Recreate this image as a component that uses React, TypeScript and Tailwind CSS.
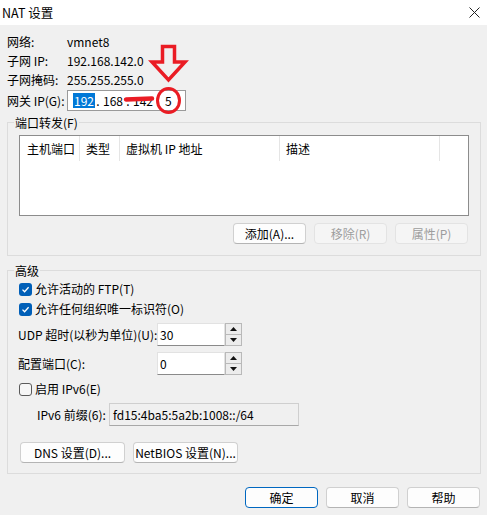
import React from "react";

const font = { fontFamily: '"Noto Sans CJK SC", "Noto Sans", sans-serif' };

function Btn({ label, w, disabled, primary }: { label: string; w: string; disabled?: boolean; primary?: boolean }) {
  let cls = "h-[21px] flex items-center justify-center rounded-[4px] border text-[12px] leading-[16px] whitespace-nowrap ";
  if (disabled) cls += "bg-[#f5f5f5] border-[#e3e3e3] text-[#9d9d9d]";
  else if (primary) cls += "bg-[#fdfdfd] border-[#0067c0] text-black";
  else cls += "bg-[#fdfdfd] border-[#d0d0d0] border-b-[#b4b4b4] text-black";
  return <div className={cls + " " + w}>{label}</div>;
}

function Check({ checked }: { checked: boolean }) {
  if (checked)
    return (
      <div className="w-[13px] h-[13px] rounded-[3px] bg-[#005fb8] flex items-center justify-center shrink-0">
        <svg width="9" height="9" viewBox="0 0 9 9">
          <path d="M1.5 4.6 L3.6 6.7 L7.6 2.2" stroke="white" strokeWidth="1.3" fill="none" />
        </svg>
      </div>
    );
  return <div className="w-[13px] h-[13px] rounded-[3px] border border-[#5a5a5a] bg-[#f6f6f6] shrink-0" />;
}

function Spin() {
  return (
    <div className="w-[17px] h-[23px] flex flex-col border border-[#b9b9b9] bg-[#f0f0f0]">
      <div className="flex-1 flex items-center justify-center border-b border-[#b9b9b9] bg-[#ececec]">
        <svg width="7" height="4" viewBox="0 0 7 4">
          <path d="M0 4 L3.5 0 L7 4 Z" fill="#111" />
        </svg>
      </div>
      <div className="flex-1 flex items-center justify-center bg-[#ececec]">
        <svg width="7" height="4" viewBox="0 0 7 4">
          <path d="M0 0 L3.5 4 L7 0 Z" fill="#111" />
        </svg>
      </div>
    </div>
  );
}

function Input({ value }: { value: string }) {
  return (
    <div className="w-[68px] h-[23px] bg-white border border-[#e2e2e2] border-b-[#8a8a8a] pl-[2px] flex items-center text-[12px] leading-[16px]">
      {value}
    </div>
  );
}

export default function App() {
  return (
    <div className="relative w-[487px] h-[515px] bg-[#f0f0f0] overflow-hidden text-black text-[12px]" style={font}>
      {/* title bar */}
      <div className="h-[25px] bg-white flex items-center justify-between pl-[2px] pr-[7px]">
        <span className="text-[12.5px] leading-[16px]">NAT 设置</span>
        <svg width="11" height="11" viewBox="0 0 11 11">
          <path d="M0.5 0.5 L10.5 10.5 M10.5 0.5 L0.5 10.5" stroke="#222" strokeWidth="1" />
        </svg>
      </div>

      {/* info rows */}
      <div className="mt-[7px] pl-[7px] flex flex-col whitespace-nowrap">
        <div className="flex h-[19px] items-center leading-[16px]">
          <span className="w-[60px]">网络:</span>
          <span>vmnet8</span>
        </div>
        <div className="flex h-[19px] items-center leading-[16px]">
          <span className="w-[60px]">子网 IP:</span>
          <span>192.168.142.0</span>
        </div>
        <div className="flex h-[19px] items-center leading-[16px]">
          <span className="w-[60px]">子网掩码:</span>
          <span>255.255.255.0</span>
        </div>
        <div className="flex h-[21px] items-center leading-[16px] mt-[1px]">
          <span className="w-[60px]">网关 IP(G):</span>
          <div className="w-[119px] h-[21px] bg-white border border-[#9a9a9a] pl-[5px] flex items-center">
            <span className="w-[20px]">
              <span className="bg-[#0078d7] text-white px-[1px] leading-[15px] inline-block">192</span>
            </span>
            <span className="w-[10px] text-center">.</span>
            <span className="w-[20px]">168</span>
            <span className="w-[10px] text-center">.</span>
            <span className="w-[20px]">142</span>
            <span className="w-[10px] text-center">.</span>
            <span className="w-[20px] pl-[2px]">5</span>
          </div>
        </div>
      </div>

      {/* port forwarding group */}
      <div className="ml-[7px] mt-[11px] w-[474px] h-[134px] border border-[#dcdcdc] flex flex-col whitespace-nowrap">
        <div className="-mt-[8px] ml-[6px] px-[1px] w-fit bg-[#f0f0f0] h-[16px] leading-[16px]">端口转发(F)</div>
        <div className="ml-[11px] mt-[4px] w-[450px] h-[81px] border border-[#8c8c8c] bg-white">
          <div className="flex h-[25px] leading-[16px]">
            <div className="w-[60px] border-r border-[#e5e5e5] pl-[7px] flex items-center">主机端口</div>
            <div className="w-[40px] border-r border-[#e5e5e5] pl-[6px] flex items-center">类型</div>
            <div className="w-[160px] border-r border-[#e5e5e5] pl-[6px] flex items-center">虚拟机 IP 地址</div>
            <div className="w-[160px] border-r border-[#e5e5e5] pl-[6px] flex items-center">描述</div>
          </div>
        </div>
        <div className="flex justify-end gap-[8px] pr-[12px] mt-[7px]">
          <Btn label="添加(A)..." w="w-[73px]" />
          <Btn label="移除(R)" w="w-[73px]" disabled />
          <Btn label="属性(P)" w="w-[73px]" disabled />
        </div>
      </div>

      {/* advanced group */}
      <div className="ml-[7px] mt-[14px] w-[474px] h-[204px] border border-[#dcdcdc] flex flex-col whitespace-nowrap">
        <div className="-mt-[8px] ml-[6px] px-[1px] w-fit bg-[#f0f0f0] h-[16px] leading-[16px]">高级</div>
        <div className="pl-[11px] h-[20px] flex items-center gap-[3px] leading-[16px]">
          <Check checked />
          <span>允许活动的 FTP(T)</span>
        </div>
        <div className="pl-[11px] h-[20px] flex items-center gap-[3px] leading-[16px]">
          <Check checked />
          <span>允许任何组织唯一标识符(O)</span>
        </div>
        <div className="pl-[10px] mt-[4px] h-[23px] flex items-center leading-[16px]">
          <span className="w-[139px] shrink-0">UDP 超时(以秒为单位)(U):</span>
          <Input value="30" />
          <Spin />
        </div>
        <div className="pl-[10px] mt-[6px] h-[23px] flex items-center leading-[16px]">
          <span className="w-[139px] shrink-0">配置端口(C):</span>
          <Input value="0" />
          <Spin />
        </div>
        <div className="pl-[11px] mt-[4px] h-[20px] flex items-center gap-[3px] leading-[16px]">
          <Check checked={false} />
          <span>启用 IPv6(E)</span>
        </div>
        <div className="pl-[29px] mt-[4px] h-[23px] flex items-center leading-[16px]">
          <span className="w-[72px] shrink-0">IPv6 前缀(6):</span>
          <div className="w-[190px] h-[23px] bg-[#f0f0f0] border border-[#cfcfcf] border-b-[#a8a8a8] pl-[3px] flex items-center">
            fd15:4ba5:5a2b:1008::/64
          </div>
        </div>
        <div className="pl-[12px] mt-[16px] flex gap-[8px]">
          <Btn label="DNS 设置(D)..." w="w-[105px]" />
          <Btn label="NetBIOS 设置(N)..." w="w-[105px]" />
        </div>
      </div>

      {/* bottom buttons */}
      <div className="mt-[13px] flex justify-end gap-[8px] pr-[7px]">
        <Btn label="确定" w="w-[73px]" primary />
        <Btn label="取消" w="w-[73px]" />
        <Btn label="帮助" w="w-[73px]" />
      </div>

      {/* red annotation overlay */}
      <svg className="absolute left-0 top-0 pointer-events-none" width="487" height="515" viewBox="0 0 487 515">
        <path
          d="M162.5 46.5 L174.5 46.5 L174.5 62 L185 62 L168.5 80 L152 62 L162.5 62 Z"
          fill="none"
          stroke="#ea1c24"
          strokeWidth="3.5"
          strokeLinejoin="miter"
        />
        <ellipse cx="168.5" cy="100.5" rx="11" ry="12" fill="none" stroke="#ea1c24" strokeWidth="3" />
        <path d="M126 99.5 L152 98.5" stroke="#ea1c24" strokeWidth="4.5" strokeLinecap="round" />
      </svg>
    </div>
  );
}
